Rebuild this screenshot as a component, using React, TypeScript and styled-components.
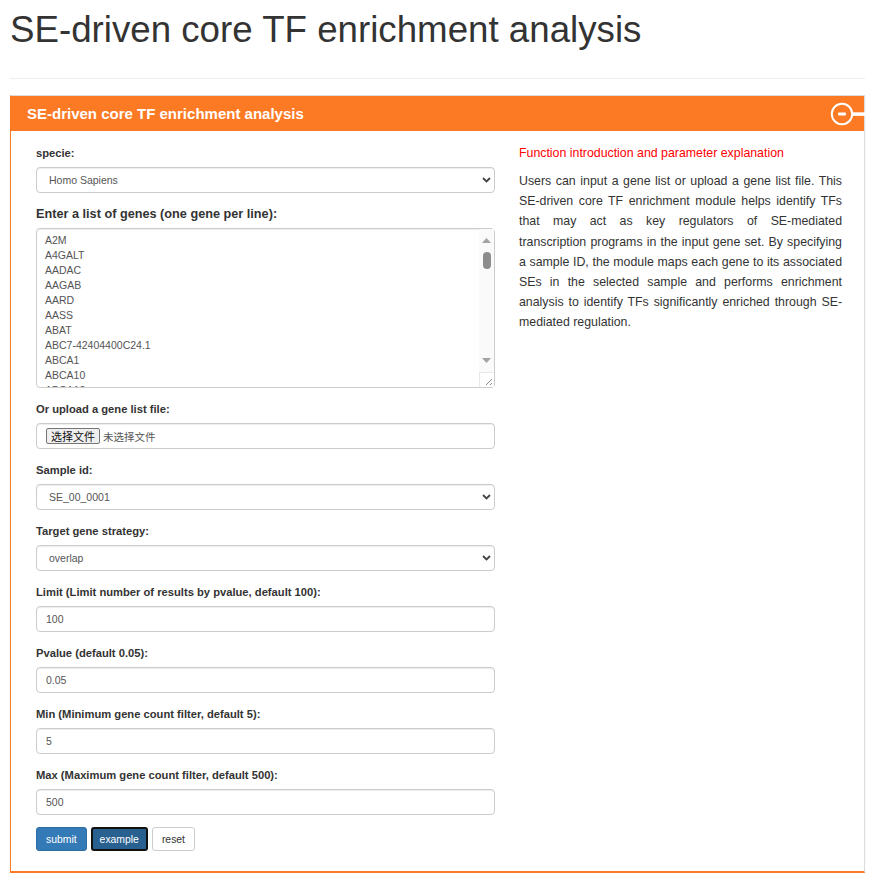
import React from 'react';
import styled, { createGlobalStyle } from 'styled-components';

const ORANGE = '#fd7a25';

const Global = createGlobalStyle`
  html, body { margin: 0; padding: 0; background: #fff; }
  body {
    font-family: "Liberation Sans", Arial, "Noto Sans CJK SC", sans-serif;
    color: #333;
  }
  * { box-sizing: border-box; }
`;

const Page = styled.div`
  padding: 0 11px 0 10px;
`;

const Title = styled.h1`
  margin: 10px 0 0;
  font-size: 36.7px;
  font-weight: 400;
  line-height: 40px;
  color: #333;
`;

const Rule = styled.hr`
  margin: 28px 0 16px;
  border: 0;
  border-top: 1px solid #eee;
`;

const Panel = styled.section`
  border: 1px solid #ddd;
  border-left-color: ${ORANGE};
  border-bottom: 2px solid ${ORANGE};
  box-shadow: 0 1px 1px rgba(0, 0, 0, 0.12);
  background: #fff;
`;

const PanelHeader = styled.header`
  height: 35px;
  background: ${ORANGE};
  display: flex;
  align-items: center;
  justify-content: space-between;
  padding-left: 16px;
`;

const PanelTitle = styled.h3`
  margin: 0;
  font-size: 15px;
  font-weight: 700;
  color: #fff;
`;

const CollapseIcon = styled.svg`
  display: block;
  margin-right: -1px;
`;

const PanelBody = styled.div`
  display: grid;
  grid-template-columns: 459px 1fr;
  column-gap: 24px;
  padding: 14px 22px 20px 25px;
`;

const Form = styled.form`
  display: flex;
  flex-direction: column;
`;

const Group = styled.div`
  margin-bottom: 13px;
`;

const Label = styled.label<{ $large?: boolean }>`
  display: block;
  font-size: ${({ $large }) => ($large ? '12.7px' : '11.2px')};
  font-weight: 700;
  line-height: 16px;
  margin-bottom: 6px;
  color: #333;
`;

const fieldBase = `
  width: 100%;
  height: 26px;
  border: 1px solid #ccc;
  border-radius: 4px;
  background: #fff;
  color: #555;
  font-family: "Liberation Sans", Arial, sans-serif;
  font-size: 10.5px;
  box-shadow: inset 0 1px 1px rgba(0,0,0,.075);
  outline: none;
`;

const TextInput = styled.input`
  ${fieldBase}
  padding: 0 9px;
  display: block;
`;

const SelectWrap = styled.div`
  position: relative;
`;

const Select = styled.select`
  ${fieldBase}
  appearance: none;
  -webkit-appearance: none;
  padding: 0 24px 0 12px;
  display: block;
`;

const Chevron = styled.svg`
  position: absolute;
  right: 4px;
  top: 50%;
  margin-top: -3px;
  pointer-events: none;
`;

const AreaWrap = styled.div`
  position: relative;
`;

const TextArea = styled.textarea`
  ${fieldBase}
  display: block;
  height: 160px;
  padding: 4px 24px 4px 8px;
  line-height: 15px;
  resize: vertical;
  overflow: hidden;

  &::-webkit-resizer {
    background-color: #fff;
    border-top: 1px solid #e6e6e6;
    border-left: 1px solid #e6e6e6;
    background-image: linear-gradient(
      135deg,
      transparent 55%,
      #9a9a9a 55%,
      #9a9a9a 61%,
      transparent 61%,
      transparent 75%,
      #9a9a9a 75%,
      #9a9a9a 81%,
      transparent 81%
    );
  }
`;

const ScrollBar = styled.div`
  position: absolute;
  top: 1px;
  right: 1px;
  bottom: 16px;
  width: 15px;
  background: #fafafa;
  display: flex;
  flex-direction: column;
  align-items: center;
  pointer-events: none;
`;

const ScrollButton = styled.div`
  height: 23px;
  width: 100%;
  display: flex;
  align-items: center;
  justify-content: center;
  flex: none;
`;

const ScrollTrack = styled.div`
  flex: 1;
  width: 100%;
  display: flex;
  justify-content: center;
`;

const ScrollThumb = styled.div`
  width: 8px;
  height: 17px;
  border-radius: 4px;
  background: #8c8c8c;
`;

const Corner = styled.div`
  position: absolute;
  right: 1px;
  bottom: 1px;
  width: 15px;
  height: 15px;
  border-top: 1px solid #e8e8e8;
  border-left: 1px solid #e8e8e8;
  background: #fff;
  pointer-events: none;
  display: flex;
  align-items: flex-end;
  justify-content: flex-end;
`;

const FileBox = styled.div`
  ${fieldBase}
  display: flex;
  align-items: center;
  padding: 0 9px;
  gap: 3px;
`;

const FileButton = styled.span`
  display: inline-flex;
  align-items: center;
  height: 16px;
  padding: 0 4px;
  background: #efefef;
  border: 1px solid #767676;
  border-radius: 2px;
  color: #111;
  font-family: "Noto Sans CJK SC", sans-serif;
  font-size: 11px;
  line-height: 14px;
`;

const FileText = styled.span`
  color: #555;
  font-family: "Noto Sans CJK SC", sans-serif;
  font-size: 10.5px;
`;

const Buttons = styled.div`
  display: flex;
  gap: 4px;
  margin-top: -1px;
`;

const Btn = styled.button<{ $variant: 'primary' | 'focus' | 'default' }>`
  height: 24px;
  padding: 0 9px;
  border-radius: 3px;
  font-family: "Liberation Sans", Arial, sans-serif;
  font-size: 10.4px;
  cursor: pointer;
  ${({ $variant }) =>
    $variant === 'primary'
      ? `background:#337ab7;border:1px solid #2e6da4;color:#fff;`
      : $variant === 'focus'
      ? `background:#286090;border:2px solid #111;color:#fff;padding:0 7px;`
      : `background:#fff;border:1px solid #ccc;color:#333;`}
`;

const Info = styled.div`
  font-size: 12.35px;
`;

const InfoHeading = styled.div`
  color: #f00;
  line-height: 16px;
  margin-bottom: 10px;
`;

const InfoText = styled.p`
  margin: 0;
  line-height: 20.2px;
  text-align: justify;
  color: #333;
`;

const genes = [
  'A2M', 'A4GALT', 'AADAC', 'AAGAB', 'AARD', 'AASS', 'ABAT', 'ABC7-42404400C24.1', 'ABCA1', 'ABCA10',
  'ABCA12', 'ABCA13', 'ABCA2', 'ABCA3', 'ABCA4', 'ABCA5', 'ABCA6', 'ABCA7', 'ABCA8', 'ABCA9',
  'ABCB1', 'ABCB10', 'ABCB11', 'ABCB4', 'ABCB5', 'ABCB6', 'ABCB7', 'ABCB8', 'ABCB9', 'ABCC1',
  'ABCC10', 'ABCC11', 'ABCC12', 'ABCC2', 'ABCC3', 'ABCC4', 'ABCC5', 'ABCC6', 'ABCC8', 'ABCC9',
  'ABCD1', 'ABCD2', 'ABCD3', 'ABCD4', 'ABCE1', 'ABCF1', 'ABCF2', 'ABCF3', 'ABCG1', 'ABCG2',
  'ABCG4', 'ABCG5', 'ABCG8', 'ABHD1', 'ABHD10', 'ABHD11', 'ABHD12', 'ABHD13',
].join('\n');

const SelectField: React.FC<{ value: string; options: string[] }> = ({ value, options }) => (
  <SelectWrap>
    <Select defaultValue={value}>
      {options.map((o) => (
        <option key={o}>{o}</option>
      ))}
    </Select>
    <Chevron width="9" height="6" viewBox="0 0 9 6">
      <path d="M1 1 L4.5 4.5 L8 1" fill="none" stroke="#444" strokeWidth="1.8" />
    </Chevron>
  </SelectWrap>
);

export default function App() {
  return (
    <>
      <Global />
      <Page>
        <Title>SE-driven core TF enrichment analysis</Title>
        <Rule />
        <Panel>
          <PanelHeader>
            <PanelTitle>SE-driven core TF enrichment analysis</PanelTitle>
            <CollapseIcon width="35" height="24" viewBox="0 0 35 24">
              <circle cx="12" cy="12" r="10.2" fill="none" stroke="#fff" strokeWidth="2" />
              <rect x="8" y="10.5" width="8" height="3" rx="1" fill="#fff" />
              <rect x="22.5" y="10.3" width="12.5" height="3.6" fill="#fff" />
            </CollapseIcon>
          </PanelHeader>
          <PanelBody>
            <Form onSubmit={(e) => e.preventDefault()}>
              <Group>
                <Label>specie:</Label>
                <SelectField value="Homo Sapiens" options={['Homo Sapiens', 'Mus musculus']} />
              </Group>
              <Group>
                <Label $large>Enter a list of genes (one gene per line):</Label>
                <AreaWrap>
                  <TextArea defaultValue={genes} />
                  <ScrollBar>
                    <ScrollButton>
                      <svg width="9" height="5" viewBox="0 0 9 5">
                        <path d="M0 5 L4.5 0 L9 5 Z" fill="#a3a3a3" />
                      </svg>
                    </ScrollButton>
                    <ScrollTrack>
                      <ScrollThumb />
                    </ScrollTrack>
                    <ScrollButton>
                      <svg width="9" height="5" viewBox="0 0 9 5">
                        <path d="M0 0 L4.5 5 L9 0 Z" fill="#a3a3a3" />
                      </svg>
                    </ScrollButton>
                  </ScrollBar>
                  <Corner>
                    <svg width="14" height="14" viewBox="0 0 14 14">
                      <path d="M6 12 L12 6 M10 12 L12 10" stroke="#8a8a8a" strokeWidth="1" />
                    </svg>
                  </Corner>
                </AreaWrap>
              </Group>
              <Group>
                <Label>Or upload a gene list file:</Label>
                <FileBox>
                  <FileButton>选择文件</FileButton>
                  <FileText>未选择文件</FileText>
                </FileBox>
              </Group>
              <Group>
                <Label>Sample id:</Label>
                <SelectField value="SE_00_0001" options={['SE_00_0001', 'SE_00_0002']} />
              </Group>
              <Group>
                <Label>Target gene strategy:</Label>
                <SelectField value="overlap" options={['overlap', 'proximal', 'closest']} />
              </Group>
              <Group>
                <Label>Limit (Limit number of results by pvalue, default 100):</Label>
                <TextInput defaultValue="100" />
              </Group>
              <Group>
                <Label>Pvalue (default 0.05):</Label>
                <TextInput defaultValue="0.05" />
              </Group>
              <Group>
                <Label>Min (Minimum gene count filter, default 5):</Label>
                <TextInput defaultValue="5" />
              </Group>
              <Group>
                <Label>Max (Maximum gene count filter, default 500):</Label>
                <TextInput defaultValue="500" />
              </Group>
              <Buttons>
                <Btn type="submit" $variant="primary">submit</Btn>
                <Btn type="button" $variant="focus">example</Btn>
                <Btn type="reset" $variant="default">reset</Btn>
              </Buttons>
            </Form>
            <Info>
              <InfoHeading>Function introduction and parameter explanation</InfoHeading>
              <InfoText>
                Users can input a gene list or upload a gene list file. This SE-driven core TF
                enrichment module helps identify TFs that may act as key regulators of SE-mediated
                transcription programs in the input gene set. By specifying a sample ID, the module
                maps each gene to its associated SEs in the selected sample and performs enrichment
                analysis to identify TFs significantly enriched through SE-mediated regulation.
              </InfoText>
            </Info>
          </PanelBody>
        </Panel>
      </Page>
    </>
  );
}
